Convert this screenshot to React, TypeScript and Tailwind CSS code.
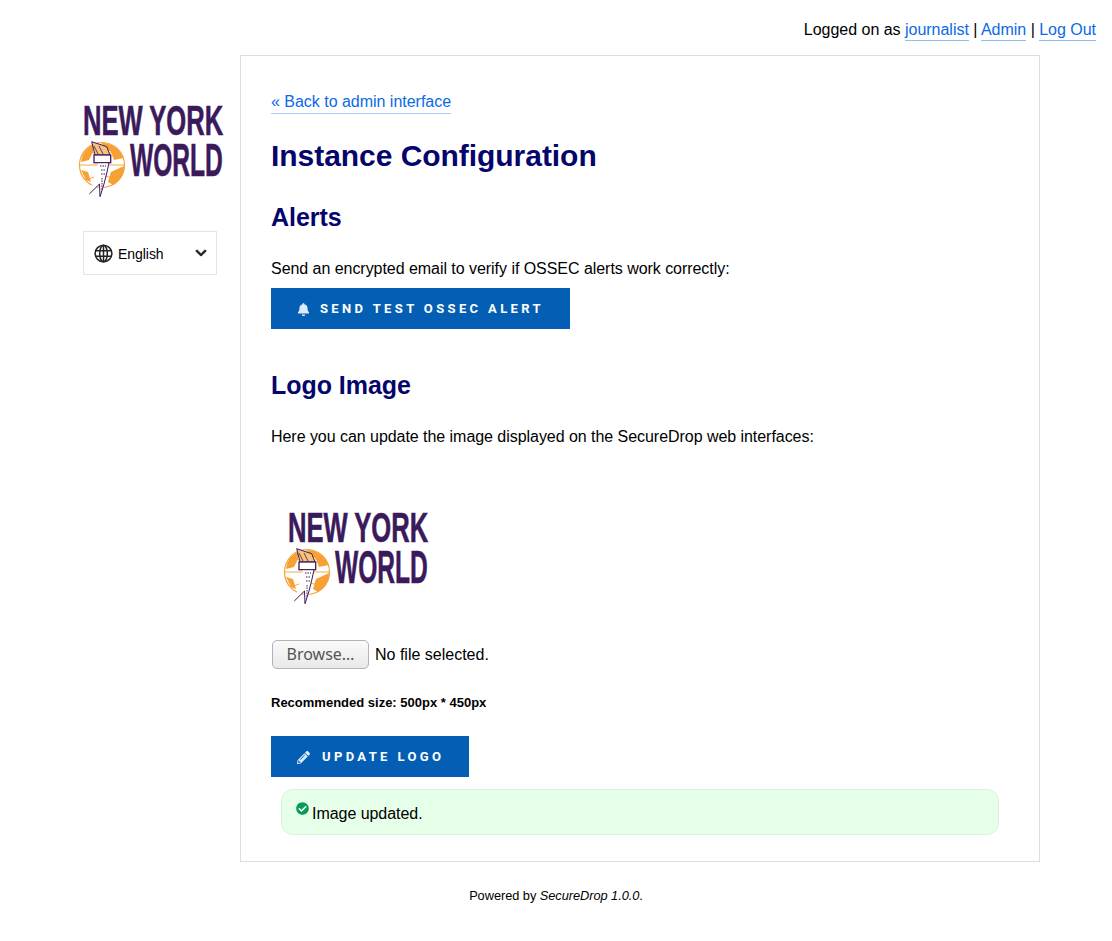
import { FaBell, FaCheckCircle, FaChevronDown, FaPencilAlt } from 'react-icons/fa';

function Logo({ className }: { className: string }) {
  return (
    <svg viewBox="0 0 146 100" className={className} aria-label="New York World">
      <g fill="#3b1a5c" stroke="#3b1a5c" strokeWidth="0.6" fontFamily="'Liberation Sans', sans-serif" fontWeight="700">
        <text transform="translate(5 35) scale(0.61 1)" fontSize="42">NEW YORK</text>
        <text transform="translate(52 76) scale(0.535 1)" fontSize="46">WORLD</text>
      </g>
      {/* globe */}
      <circle cx="24" cy="65" r="22.500" fill="#fff" stroke="#f7a033" strokeWidth="1.200" />
      <path d="M24 43 C34 43 42 49 45.500 58 L36 60 L33 52 L26 47 Z" fill="#f7a033" />
      <path d="M8 50 C11 47 14 45 16 44 L15 52 L11 60 L3 62 C3.500 57 5 53 8 50 Z" fill="#f7a033" />
      <path d="M33 72 L46 66 C46 74 42 81 35 85 L30 82 Z" fill="#f7a033" />
      <path d="M3 70 L10 72 L13 82 L8 80 Z" fill="#f7a033" />
      <path d="M2 65 H46 M24 43 V87 M8 50 Q24 58 40 50 M8 80 Q24 72 40 80" fill="none" stroke="#f7a033" strokeWidth="0.900" />
      {/* torch */}
      <path d="M13.700 41.700 L28.700 46.700 L32 55 L17 55 Z" fill="#f7c27c" stroke="#3b1a5c" strokeWidth="1" />
      <path d="M16 46 L20 54 M21 46 L25 54" stroke="#3b1a5c" strokeWidth="0.800" />
      <rect x="16" y="55" width="16.700" height="7.700" fill="#fff" stroke="#3b1a5c" strokeWidth="1.300" />
      <path d="M20.300 62.700 L31 62.700 L29 72 L26 84 L22 96.700 L21.500 84 L11.300 94" fill="#fff" stroke="#3b1a5c" strokeWidth="1" />
      <path d="M22 66 L28 66 M23 70 L28 70 M23 74 L27 74 M24 78 L24 90" stroke="#3b1a5c" strokeWidth="1" strokeDasharray="1.500 1" />
    </svg>
  );
}

export default function App() {
  const link = 'text-[#0a6ae6] border-b border-[#8dbdf5] pb-[2px]';

  return (
    <div className="h-[941px] overflow-hidden bg-white font-['Liberation_Sans',sans-serif] text-base tracking-[-0.045px] text-black">
      <div className="flex h-[55px] justify-end pt-[19px] pr-[16px] leading-[22px] tracking-[-0.02px]">
        <span>
          Logged on as <a className={link}>journalist</a> | <a className={link}>Admin</a> | <a className={link}>Log Out</a>
        </span>
      </div>

      <div className="flex">
        <aside className="w-[240px] shrink-0 pt-[45px] pl-[78px]">
          <Logo className="block h-[100px] w-[146px]" />
          <div className="mt-[31px] ml-[5px] flex h-[44px] w-[134px] items-center border border-[#e4e4e4] pr-[10px] pl-[10px]">
            <svg viewBox="0 0 20 20" className="h-[19px] w-[19px] shrink-0" fill="none" stroke="#222" strokeWidth="1.600">
              <circle cx="10" cy="10" r="8.800" />
              <ellipse cx="10" cy="10" rx="4" ry="8.800" />
              <path d="M10 1.200 V18.800 M1.800 7 H18.200 M1.800 13 H18.200" />
            </svg>
            <span className="ml-[5px] pt-[2px] text-[14px] leading-none">English</span>
            <FaChevronDown size={12} className="ml-auto -mr-[1px] stroke-[30px] text-[#222]" />
          </div>
        </aside>

        <main className="h-[807px] w-[800px] shrink-0 border border-[#dddddd] pt-[34px] pl-[30px]">
          <a className="inline-block border-b border-[#a8ccf7] leading-[22px] tracking-[-0.02px] text-[#0a6ae6]">« Back to admin interface</a>
          <h1 className="mt-[24px] text-[30px] leading-[36px] font-bold text-[#05056b]">Instance Configuration</h1>
          <h2 className="mt-[29px] text-[25px] leading-[28px] font-bold text-[#05056b]">Alerts</h2>
          <p className="mt-[27px] leading-[22px]">Send an encrypted email to verify if OSSEC alerts work correctly:</p>
          <button className="mt-[8px] flex h-[41px] w-[299px] items-center bg-[#045fb4] pt-[1px] pl-[26px] font-['Roboto',sans-serif] text-[13px] font-bold tracking-[3.370px] text-white">
            <FaBell size={13} className="mr-[10px] text-[#dcebfa]" />
            SEND TEST OSSEC ALERT
          </button>
          <h2 className="mt-[42px] text-[25px] leading-[28px] font-bold text-[#05056b]">Logo Image</h2>
          <p className="mt-[27px] leading-[22px]">Here you can update the image displayed on the SecureDrop web interfaces:</p>
          <Logo className="mt-[59px] ml-[12px] block h-[100px] w-[146px]" />
          <div className="mt-[32px] flex h-[30px] items-center">
            <button className="ml-[1px] h-[29px] w-[97px] rounded-[5px] border border-[#b3b3b3] bg-gradient-to-b from-[#fafafa] to-[#e9e9e9] font-['Noto_Sans',sans-serif] text-[16px] tracking-normal text-[#555]">
              Browse…
            </button>
            <span className="ml-[6px] pt-[2px] tracking-normal">No file selected.</span>
          </div>
          <p className="mt-[24px] text-[13px] leading-[20px] font-bold tracking-normal">Recommended size: 500px * 450px</p>
          <button className="mt-[23px] flex h-[41px] w-[198px] items-center bg-[#045fb4] pt-[1px] pl-[26px] font-['Roboto',sans-serif] text-[13px] font-bold tracking-[3.370px] text-white">
            <FaPencilAlt size={13} className="mr-[12px] text-[#dcebfa]" />
            UPDATE LOGO
          </button>
          <div className="mt-[12px] ml-[10px] flex h-[46px] w-[718px] rounded-[12px] border border-[#d8f2dd] bg-[#e6ffe9] pt-[12px] pl-[14px]">
            <FaCheckCircle size={13} className="text-[#0a9b5b]" />
            <span className="ml-[3px] pt-[1px] leading-[22px]">Image updated.</span>
          </div>
        </main>
      </div>

      <p className="mt-[26px] text-center text-[12.800px] leading-[16px]">
        Powered by <em>SecureDrop 1.0.0</em>.
      </p>
    </div>
  );
}
